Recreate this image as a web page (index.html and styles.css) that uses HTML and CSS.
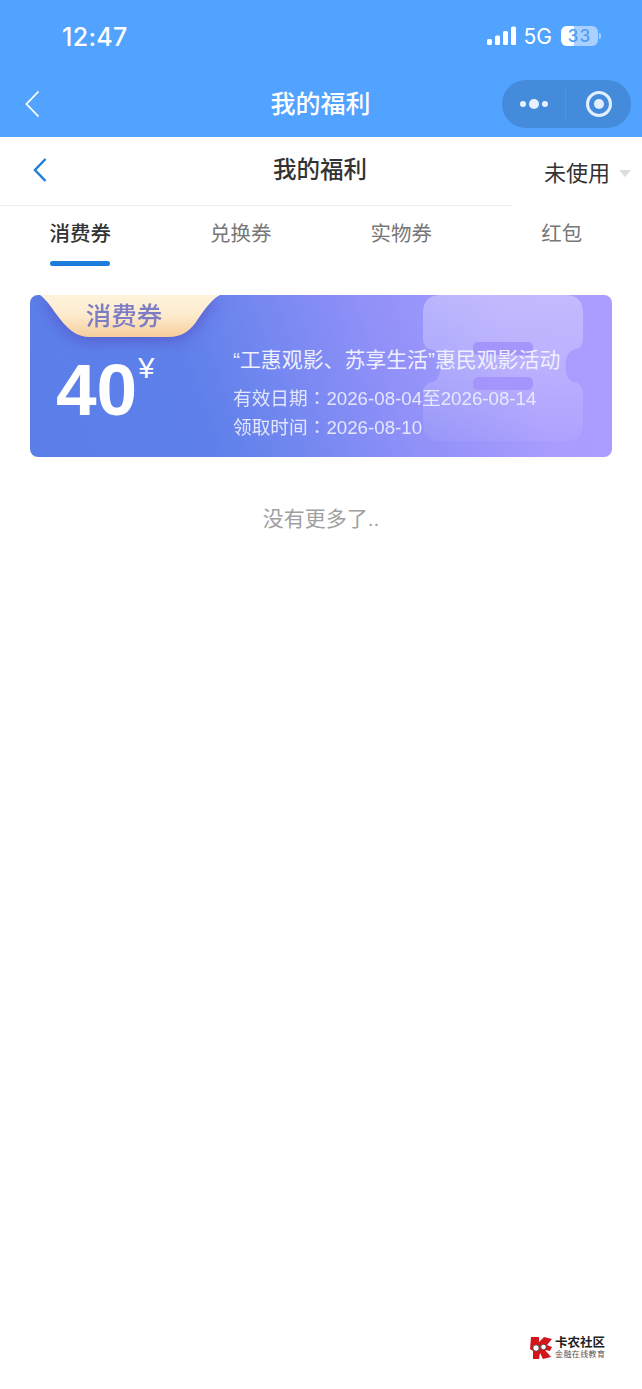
FILE: index.html
```html
<!DOCTYPE html>
<html lang="zh-CN">

<head>
    <meta charset="UTF-8">
    <meta name="viewport" content="width=device-width, initial-scale=1.0">
    <title>我的福利</title>
    <link rel="stylesheet" href="styles.css">
</head>

<body>
    <div class="top">
        <div class="status">
            <span class="time">12:47</span>
            <div class="status-right">
                <svg class="signal" width="30" height="20" viewBox="0 0 30 20">
                    <rect x="0" y="13" width="5" height="6" rx="1.5" fill="#fff" />
                    <rect x="8" y="9.500" width="5" height="9.500" rx="1.500" fill="#fff" />
                    <rect x="16" y="5" width="5" height="14" rx="1.500" fill="#fff" />
                    <rect x="24" y="0.500" width="5" height="18.500" rx="1.500" fill="#fff" />
                </svg>
                <span class="net">5G</span>
                <div class="battery">
                    <div class="battery-fill"></div>
                    <span class="battery-num">33</span>
                </div>
                <div class="battery-tip"></div>
            </div>
        </div>
        <div class="nav">
            <svg class="nav-back" width="18" height="28" viewBox="0 0 18 28">
                <path d="M14.500 1.500 L2.500 14 L14.500 26.500" fill="none" stroke="#fff" stroke-width="1.800" />
            </svg>
            <span class="nav-title">我的福利</span>
            <div class="capsule">
                <div class="capsule-dots">
                    <i class="dot"></i>
                    <i class="dot dot-big"></i>
                    <i class="dot"></i>
                </div>
                <div class="capsule-line"></div>
                <div class="capsule-circle"><i></i></div>
            </div>
        </div>
    </div>

    <div class="sub">
        <div class="sub-head">
            <svg class="sub-back" width="16" height="26" viewBox="0 0 16 26">
                <path d="M13.500 2 L3 13 L13.500 24" fill="none" stroke="#1f7fd6" stroke-width="2.500" />
            </svg>
            <span class="sub-title">我的福利</span>
        </div>
        <div class="filter">
            <span>未使用</span>
            <i class="arrow"></i>
        </div>
    </div>

    <div class="tabs">
        <div class="tab active">消费券</div>
        <div class="tab">兑换券</div>
        <div class="tab">实物券</div>
        <div class="tab">红包</div>
    </div>

    <div class="card">
        <svg class="mark" width="160" height="146" viewBox="0 0 160 146">
            <defs>
                <linearGradient id="markfill" x1="0" y1="0" x2="0" y2="1">
                    <stop offset="0" stop-color="#fff" stop-opacity="0.3" />
                    <stop offset="0.500" stop-color="#fff" stop-opacity="0.2" />
                    <stop offset="1" stop-color="#fff" stop-opacity="0.05" />
                </linearGradient>
            </defs>
            <path d="M18 0 H142 Q160 0 160 18 V44 Q160 54 150 55 C140 58 140 84 150 87 Q160 88 160 98 V130 Q160 146 144 146 H16 Q0 146 0 130 V98 Q0 88 10 87 C20 84 20 58 10 55 Q0 54 0 44 V18 Q0 0 18 0 Z" fill="url(#markfill)" />
            <rect x="50" y="47" width="60" height="13" rx="5" fill="#a395fb" />
            <rect x="50" y="82" width="60" height="13" rx="5" fill="#a395fb" />
        </svg>
        <div class="tag">
            <svg class="tag-bg" width="180" height="42" viewBox="0 0 180 42">
                <defs>
                    <linearGradient id="tagfill" x1="0" y1="0" x2="0" y2="1">
                        <stop offset="0" stop-color="#fef3dc" />
                        <stop offset="0.500" stop-color="#fdeacb" />
                        <stop offset="1" stop-color="#f6cd9c" />
                    </linearGradient>
                </defs>
                <path d="M0 0 H180 C172 4 165 14 158 24 C151 35 143 42 128 42 H50 C36 42 28 34 20 24 C12 14 8 6 0 0 Z" fill="url(#tagfill)" />
            </svg>
            <span class="tag-text">消费券</span>
        </div>
        <div class="card-left">
            <span class="amount">40</span>
            <span class="yen">¥</span>
        </div>
        <div class="card-info">
            <div class="info-title">“工惠观影、苏享生活”惠民观影活动</div>
            <div class="info-line">有效日期<span class="colon" lang="zh-TW">：</span>2026-08-04至2026-08-14</div>
            <div class="info-line">领取时间<span class="colon" lang="zh-TW">：</span>2026-08-10</div>
        </div>
    </div>

    <div class="no-more">没有更多了..</div>

    <div class="logo">
        <svg width="23" height="24" viewBox="0 0 23 24">
            <path d="M1 1 H9 V6 L14 1 L22 3 L17 9 L22 11 L20 15 L15 14 L21 21 L13 23 L10 17 L9 23 H3 V15 L0 13 Z" fill="#d3151c" />
            <circle cx="6" cy="12" r="3.200" fill="#fff" stroke="#333" stroke-width="0.800" />
            <circle cx="13.500" cy="11" r="2.800" fill="#fff" stroke="#333" stroke-width="0.800" />
        </svg>
        <div class="logo-text">
            <div class="logo-name">卡农社区</div>
            <div class="logo-sub">金融在线教育</div>
        </div>
    </div>
</body>

</html>
```

FILE: styles.css
```css
* {
    margin: 0;
    padding: 0;
    box-sizing: border-box;
}

body {
    width: 642px;
    height: 1389px;
    position: relative;
    overflow: hidden;
    background-color: #fff;
    font-family: "Liberation Sans", "Noto Sans CJK SC", sans-serif;
}

.top {
    height: 137px;
    background-color: #51a3ff;
    color: #fff;
}

.status {
    height: 72px;
    display: flex;
    justify-content: space-between;
    align-items: center;
    padding: 0 41px 0 62px;
}

.time {
    margin-top: 2px;
    font-family: Inter, "Liberation Sans", sans-serif;
    font-size: 25px;
    font-weight: 500;
    letter-spacing: 0.3px;
}

.status-right {
    display: flex;
    align-items: center;
}

.signal {
    margin-right: 7px;
}

.net {
    font-family: Inter, "Liberation Sans", sans-serif;
    font-size: 21px;
    margin-right: 9px;
}

.battery {
    width: 37px;
    height: 20px;
    position: relative;
    background-color: #a9d0ff;
    border-radius: 6px;
    overflow: hidden;
    text-align: center;
}

.battery-fill {
    width: 13px;
    height: 20px;
    position: absolute;
    left: 0;
    top: 0;
    background-color: #fff;
}

.battery-num {
    position: relative;
    font-family: Inter, "Liberation Sans", sans-serif;
    font-size: 17px;
    line-height: 20px;
    font-weight: 500;
    color: #4d9df5;
    letter-spacing: 1px;
}

.battery-tip {
    width: 2px;
    height: 6px;
    margin-left: 1px;
    background-color: #a9d0ff;
    border-radius: 0 2px 2px 0;
}

.nav {
    height: 65px;
    display: flex;
    align-items: center;
    position: relative;
    padding: 0 11px 0 24px;
    justify-content: space-between;
}

.nav-back {
    margin-top: -1px;
}

.nav-title {
    position: absolute;
    left: -1px;
    right: 0;
    top: 15px;
    text-align: center;
    font-size: 25px;
    line-height: 34px;
    font-weight: 500;
}

.capsule {
    width: 129px;
    height: 48px;
    display: flex;
    align-items: center;
    margin-top: -2px;
    background-color: #458bdc;
    border-radius: 24px;
}

.capsule-dots {
    width: 63px;
    display: flex;
    justify-content: center;
    align-items: center;
    gap: 3px;
}

.dot {
    width: 6px;
    height: 6px;
    background-color: #e8f2ff;
    border-radius: 50%;
}

.dot-big {
    width: 10px;
    height: 10px;
}

.capsule-line {
    width: 1px;
    height: 36px;
    background-color: #4f94e3;
}

.capsule-circle {
    width: 26px;
    height: 26px;
    margin-left: 20px;
    display: flex;
    justify-content: center;
    align-items: center;
    border: 3px solid #e3efff;
    border-radius: 50%;
}

.capsule-circle i {
    width: 10px;
    height: 10px;
    background-color: #e3efff;
    border-radius: 50%;
}

.sub {
    height: 69px;
    display: flex;
}

.sub-head {
    width: 513px;
    height: 69px;
    position: relative;
    display: flex;
    align-items: center;
    padding-left: 32px;
    border-bottom: 1px solid #ececec;
}

.sub-back {
    margin-top: -2px;
}

.sub-title {
    position: absolute;
    left: 273px;
    top: 16px;
    font-size: 23.500px;
    line-height: 34px;
    font-weight: 500;
    color: #333;
}

.filter {
    flex: 1;
    display: flex;
    align-items: center;
    padding: 0 0 2px 31px;
    font-size: 22px;
    color: #333;
}

.arrow {
    width: 0;
    height: 0;
    margin: 6px 0 0 9px;
    border: 6px solid transparent;
    border-top: 7px solid #ddd;
    border-bottom: 0;
}

.tabs {
    height: 89px;
    display: flex;
}

.tab {
    width: 160.500px;
    height: 60px;
    position: relative;
    text-align: center;
    font-size: 20.500px;
    line-height: 56px;
    color: #777;
}

.tab.active {
    color: #333;
    font-weight: 500;
}

.tab.active::after {
    content: "";
    width: 60px;
    height: 5px;
    position: absolute;
    left: 50px;
    bottom: 0;
    background-color: #1b7cdc;
    border-radius: 3px;
}

.card {
    width: 582px;
    height: 162px;
    margin-left: 30px;
    position: relative;
    display: flex;
    overflow: hidden;
    border-radius: 8px;
    color: #fff;
    background: linear-gradient(70deg, #5a7ee8 0%, #5f80ea 30%, #8f90f8 60%, #a99cfe 82%, #ab9dff 100%);
}

.mark {
    position: absolute;
    right: 29px;
    top: 0;
}

.tag {
    width: 180px;
    height: 42px;
    position: absolute;
    left: 10px;
    top: 0;
    text-align: center;
    filter: drop-shadow(0 3px 8px rgba(80, 60, 180, 0.55));
}

.tag-bg {
    position: absolute;
    left: 0;
    top: 0;
}

.tag-text {
    position: relative;
    left: -6px;
    font-size: 25.500px;
    line-height: 43px;
    font-weight: 500;
    color: #7d7dc6;
}

.card-left {
    width: 203px;
    padding: 52px 0 0 26px;
    position: relative;
    display: flex;
    align-items: flex-start;
}

.amount {
    font-size: 73px;
    line-height: 86px;
    font-weight: 700;
}

.yen {
    font-size: 29px;
    line-height: 34px;
    margin: 4px 0 0 1px;
}

.card-info {
    position: relative;
    padding-top: 49px;
    color: #eef0ff;
}

.info-title {
    font-size: 20.900px;
    line-height: 32px;
    white-space: nowrap;
    margin-bottom: 8px;
}

.info-line {
    font-size: 18.700px;
    line-height: 29px;
    white-space: nowrap;
    opacity: 0.9;
}

.colon {
    font-family: "Noto Sans CJK TC", sans-serif;
    line-height: 1;
}

.no-more {
    margin-top: 44px;
    text-align: center;
    font-size: 21px;
    line-height: 36px;
    color: #a0a0a0;
}

.logo {
    position: absolute;
    left: 530px;
    top: 1336px;
    display: flex;
    align-items: center;
    gap: 2px;
}

.logo-name {
    font-size: 12.500px;
    line-height: 14px;
    font-weight: 700;
    color: #222;
}

.logo-sub {
    font-size: 8px;
    line-height: 10px;
    letter-spacing: 0.400px;
    color: #555;
}
```
